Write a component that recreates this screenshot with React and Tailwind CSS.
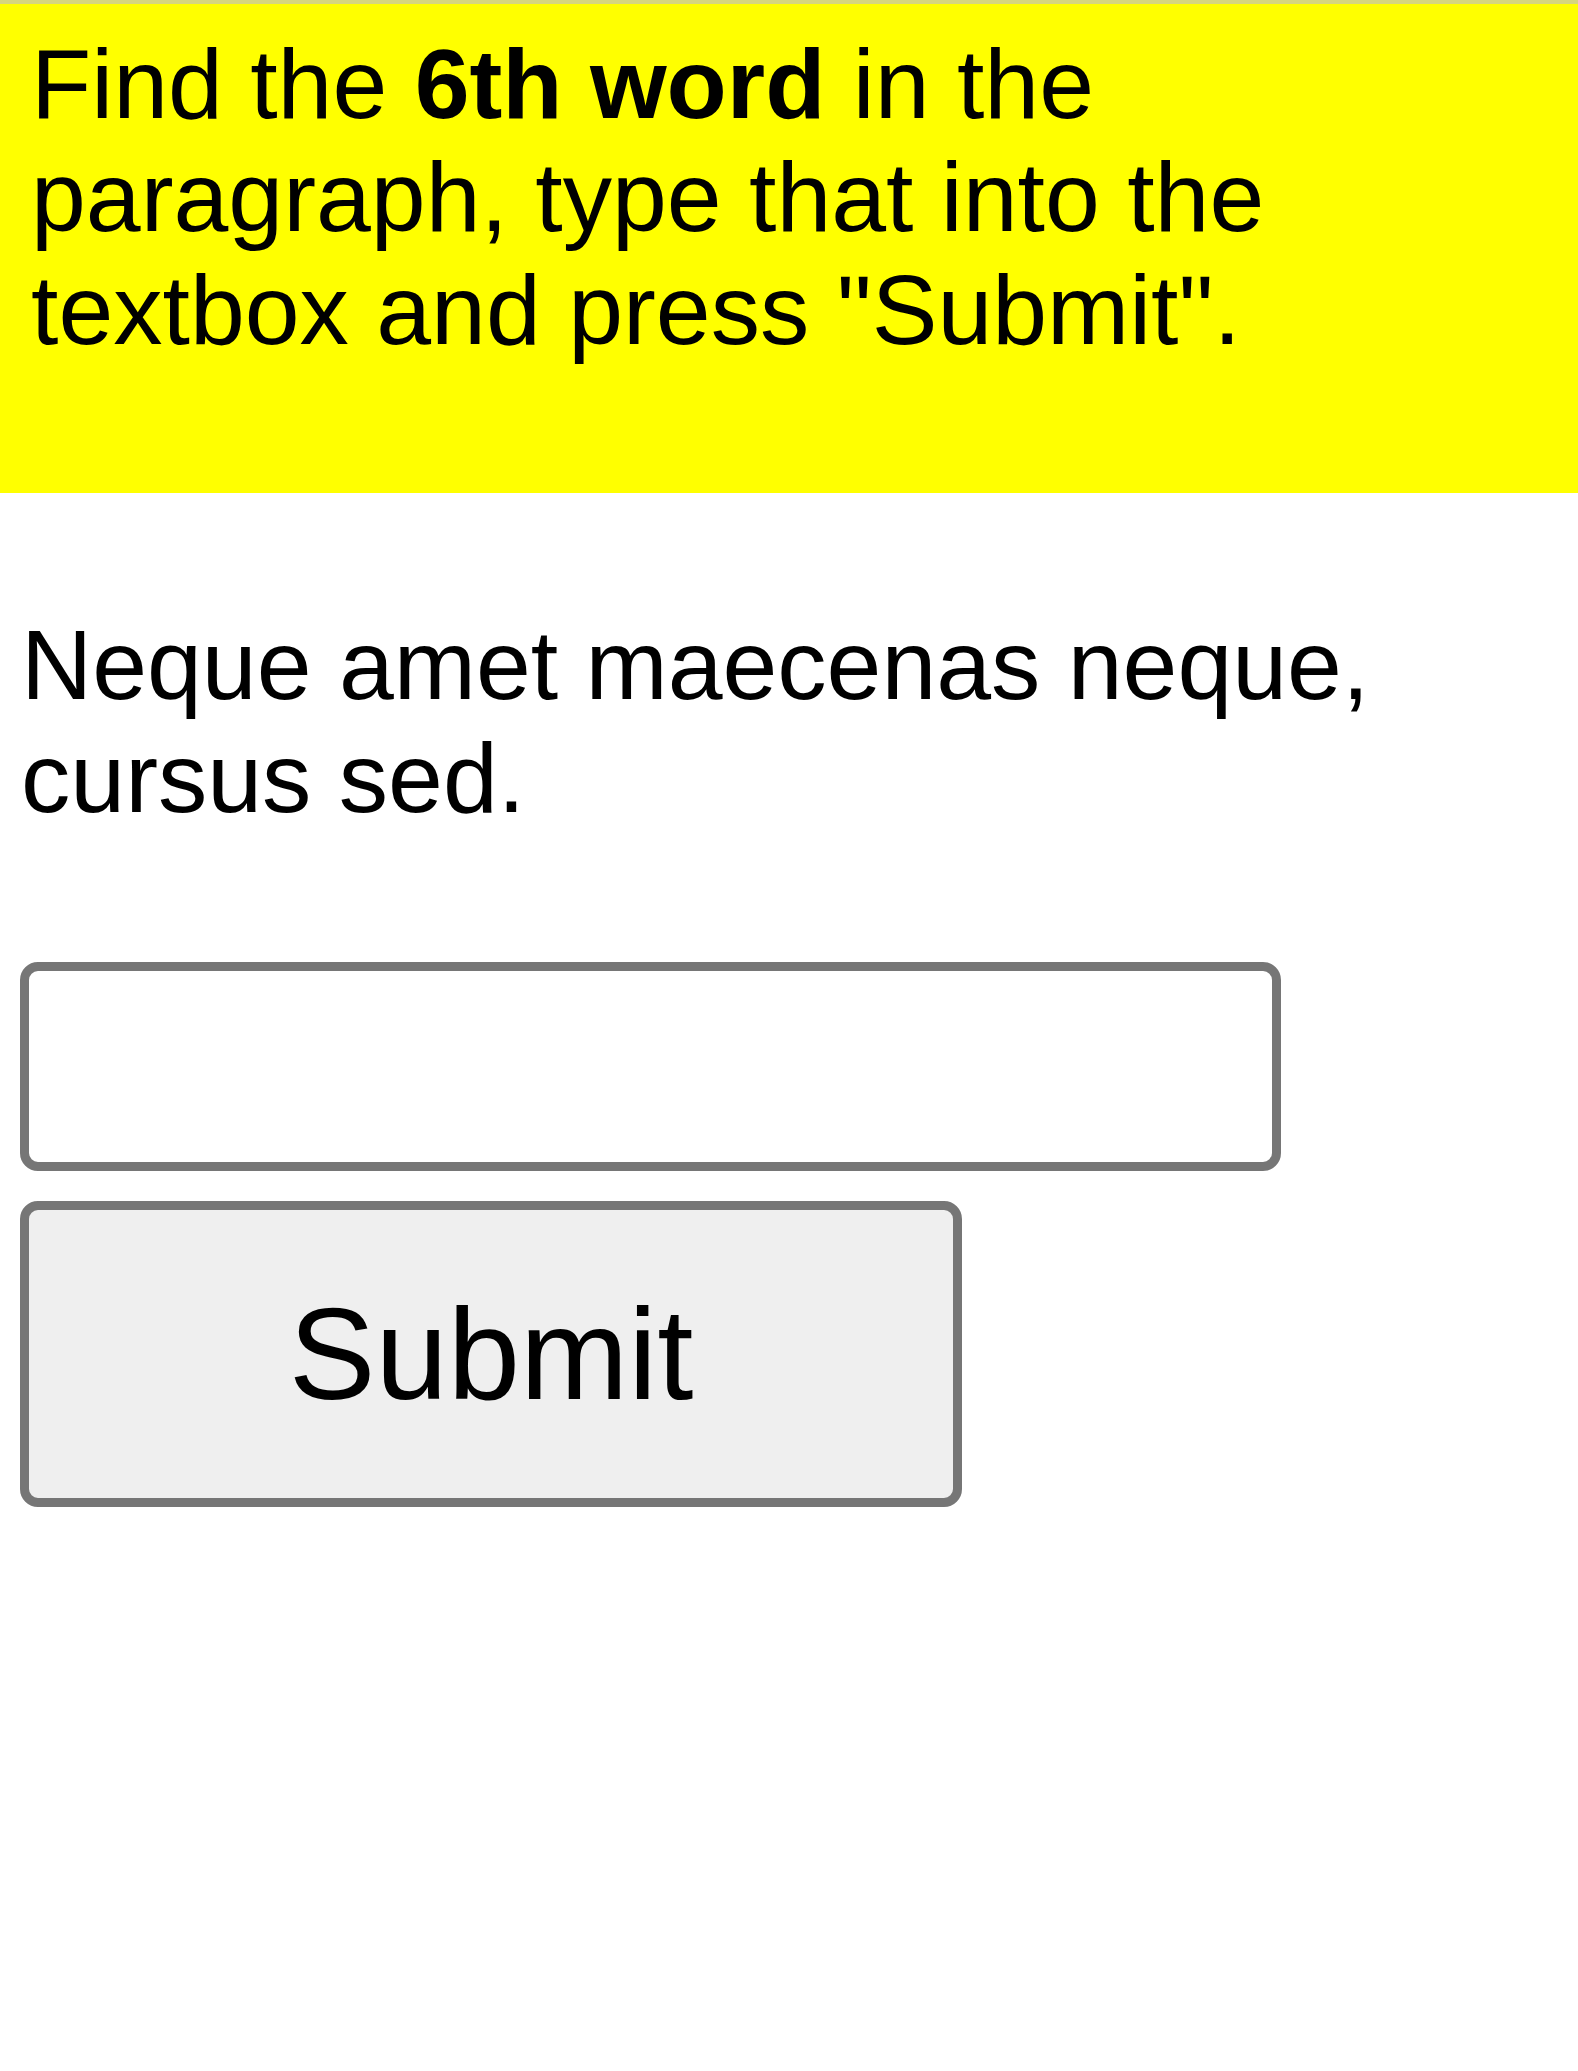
import React, { useState } from "react";

function App() {
  const [answer, setAnswer] = useState("");

  return (
    <div
      className="min-h-screen w-full bg-white text-black"
      style={{ fontFamily: '"Liberation Sans", Arial, sans-serif' }}
    >
      <div className="h-[493px] w-full bg-[#ffff00] border-t-[4px] border-[#d6d67e] pl-[31px] pr-[20px] pt-[24px]">
        <div className="text-[98.6px] leading-[113px]">
          Find the <span className="font-bold">6th word</span> in the paragraph, type that into the textbox and press "Submit".
        </div>
      </div>

      <div className="flex flex-col pl-[20px]">
        <p className="mt-[116px] ml-[1px] text-[98.6px] leading-[113px] w-[1450px]">
          Neque amet maecenas neque, cursus sed.
        </p>

        <input
          type="text"
          value={answer}
          onChange={(e) => setAnswer(e.target.value)}
          className="mt-[127px] h-[209px] w-[1261px] rounded-[18px] border-[9px] border-[#767676] bg-white px-4 text-[98.6px] outline-none"
        />

        <button
          type="button"
          className="mt-[30px] h-[306px] w-[942px] rounded-[18px] border-[9px] border-[#767676] bg-[#efefef] text-[130px] leading-none"
        >
          Submit
        </button>
      </div>
    </div>
  );
}

export default App;
